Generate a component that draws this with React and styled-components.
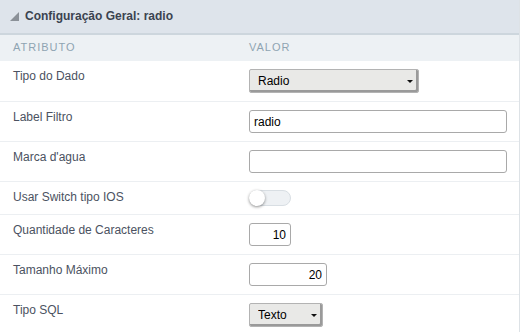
import React from 'react';
import styled, { createGlobalStyle } from 'styled-components';

const GlobalStyle = createGlobalStyle`
  html, body {
    margin: 0;
    padding: 0;
    background: #fff;
    font-family: "Liberation Sans", Arial, sans-serif;
  }
`;

const Panel = styled.div`
  width: 520px;
  box-sizing: border-box;
  border-right: 1px solid #dde2e6;
`;

const Header = styled.div`
  display: flex;
  align-items: center;
  gap: 6px;
  height: 33px;
  padding-left: 10px;
  background: #dee4eb;
  border-bottom: 2px solid #cdd6dd;
`;

const Title = styled.span`
  font-size: 12px;
  font-weight: 700;
  color: #3b4350;
  line-height: 14px;
  margin-top: -1px;
`;

const Collapse = () => (
  <svg width="9" height="9" viewBox="0 0 9 9" aria-hidden>
    <polygon points="9,0 9,9 0,9" fill="#8b9198" />
  </svg>
);

const Row = styled.div`
  display: grid;
  grid-template-columns: 236px 1fr;
  border-bottom: 1px solid #eceff2;
`;

const HeadRow = styled(Row)`
  height: 26px;
  align-items: center;
  background: #edf1f4;
  border-bottom: none;
`;

const HeadCell = styled.div`
  padding-left: 13px;
  font-size: 11px;
  letter-spacing: 1px;
  color: #8fa4b2;
  line-height: 13px;
  margin-top: -1px;
`;

const Label = styled.div`
  padding: 8px 13px;
  font-size: 12px;
  line-height: 15px;
  color: #4b5261;
`;

const Value = styled.div`
  padding: 8px 12px 8px 13px;
  display: flex;
  align-items: flex-start;
`;

const SelectWrap = styled.div`
  position: relative;
  width: ${p => p.$w}px;
  height: 24px;

  /* small caret drawn over the native select */
  &::after {
    content: '';
    position: absolute;
    right: 6px;
    top: 11px;
    border-left: 3px solid transparent;
    border-right: 3px solid transparent;
    border-top: 3px solid #111;
    pointer-events: none;
  }
`;

const Select = styled.select`
  appearance: none;
  width: 100%;
  height: 24px;
  box-sizing: border-box;
  margin: 0;
  padding: 0 0 0 8px;
  font-family: inherit;
  font-size: 12px;
  color: #000;
  background: #e9e9e7;
  border: 1px solid #b3b3b3;
  border-radius: 2px;
  box-shadow: inset -2px -2px 0 #9a9a9a;
  outline: none;
`;

const Input = styled.input`
  width: ${p => (p.$w ? `${p.$w}px` : '100%')};
  height: 23px;
  box-sizing: border-box;
  margin: 0;
  padding: 0 4px;
  font-family: inherit;
  font-size: 12px;
  color: #000;
  text-align: ${p => (p.$num ? 'right' : 'left')};
  background: #fff;
  border: 1px solid #a9a9a9;
  border-radius: 3px;
  outline: none;
`;

const Track = styled.div`
  position: relative;
  width: 42px;
  height: 16px;
  box-sizing: border-box;
  background: #eef1f4;
  border: 1px solid #d8dee3;
  border-radius: 8px;
`;

const Knob = styled.span`
  position: absolute;
  left: -1px;
  top: -1px;
  width: 16px;
  height: 16px;
  border-radius: 50%;
  background: #fff;
  box-shadow: 0 1px 3px rgba(0, 0, 0, 0.45);
`;

const rows = [
  { label: 'Tipo do Dado', type: 'select', value: 'Radio', w: 170 },
  { label: 'Label Filtro', type: 'text', value: 'radio' },
  { label: "Marca d'agua", type: 'text', value: '' },
  { label: 'Usar Switch tipo IOS', type: 'switch' },
  { label: 'Quantidade de Caracteres', type: 'num', value: '10', w: 42 },
  { label: 'Tamanho Máximo', type: 'num', value: '20', w: 78 },
  { label: 'Tipo SQL', type: 'select', value: 'Texto', w: 74 },
];

const Control = ({ row }) => {
  if (row.type === 'select') {
    return (
      <SelectWrap $w={row.w}>
        <Select defaultValue={row.value}>
          <option>{row.value}</option>
        </Select>
      </SelectWrap>
    );
  }
  if (row.type === 'switch') {
    return (
      <Track>
        <Knob />
      </Track>
    );
  }
  if (row.type === 'num') {
    return <Input $num $w={row.w} defaultValue={row.value} />;
  }
  return <Input defaultValue={row.value} />;
};

const App = () => (
  <>
    <GlobalStyle />
    <Panel>
      <Header>
        <Collapse />
        <Title>Configuração Geral: radio</Title>
      </Header>
      <HeadRow>
        <HeadCell>ATRIBUTO</HeadCell>
        <HeadCell>VALOR</HeadCell>
      </HeadRow>
      {rows.map(row => (
        <Row key={row.label}>
          <Label>{row.label}</Label>
          <Value>
            <Control row={row} />
          </Value>
        </Row>
      ))}
    </Panel>
  </>
);

export default App;
